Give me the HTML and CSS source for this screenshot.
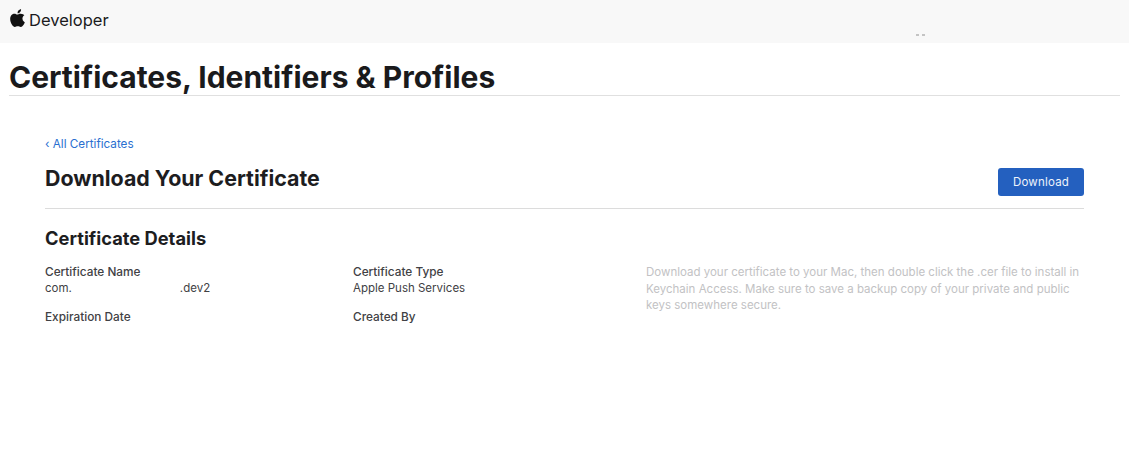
FILE: index.html
```html
<!DOCTYPE html>
<html lang="en">
<head>
<meta charset="utf-8">
<title>Download Your Certificate</title>
<link rel="stylesheet" href="styles.css">
</head>
<body>
<header class="topbar">
  <svg class="apple" viewBox="0 0 814 1000" aria-hidden="true"><path d="M788 341c-6 4-108 62-108 190 0 148 130 200 134 202-1 3-21 72-69 142-43 62-88 123-156 123s-86-40-165-40c-77 0-104 41-166 41s-106-57-156-127C44 790 0 668 0 553c0-186 121-285 240-285 63 0 116 42 155 42 38 0 97-44 169-44 27 0 125 2 224 75zM554 168c30-35 51-84 51-133 0-7-1-14-2-20-49 2-107 33-142 73-27 31-53 80-53 130 0 8 1 15 2 18 3 0 8 1 13 1 44 0 99-30 131-69z"/></svg>
  <span class="brand">Developer</span>
  <span class="specks"><i></i><i></i></span>
</header>
<div class="titlebar"><h1>Certificates, Identifiers &amp; Profiles</h1></div>
<main class="content">
  <a class="back" href="#">‹ All Certificates</a>
  <div class="head">
    <h2>Download Your Certificate</h2>
    <a class="btn" href="#">Download</a>
  </div>
  <h3>Certificate Details</h3>
  <div class="details">
    <div class="col-a">
      <div class="field">
        <div class="label">Certificate Name</div>
        <div class="value">com.<span class="blank"></span>.dev2</div>
      </div>
      <div class="label">Expiration Date</div>
    </div>
    <div class="col-b">
      <div class="field">
        <div class="label">Certificate Type</div>
        <div class="value">Apple Push Services</div>
      </div>
      <div class="label">Created By</div>
    </div>
    <p class="note">Download your certificate to your Mac, then double click the .cer file to install in Keychain Access. Make sure to save a backup copy of your private and public keys somewhere secure.</p>
  </div>
</main>
</body>
</html>
```
FILE: styles.css
```css
* { box-sizing: border-box; }
html, body { margin: 0; padding: 0; background: #fff; }
body {
  font-family: Inter, "Liberation Sans", sans-serif;
  color: #1d1d1f;
  height: 453px;
  overflow: hidden;
}
.topbar {
  position: relative;
  display: flex;
  align-items: center;
  gap: 4px;
  height: 43px;
  padding: 0 0 3px 10px;
  background: #f8f8f8;
}
.apple { width: 15px; height: 18px; margin-bottom: 5px; fill: #111; }
.brand { font-size: 16.5px; color: #1b1b1d; }
.specks { position: absolute; left: 916px; top: 34px; display: flex; gap: 3px; }
.specks i { display: block; width: 3px; height: 2px; background: #c4c4c4; }
.titlebar { margin: 0 9px; height: 53px; border-bottom: 1px solid #e0e0e0; }
h1 {
  margin: 0;
  padding-top: 16px;
  font-size: 30px;
  line-height: 36px;
  font-weight: 700;
  color: #1a1a1c;
}
.content { padding: 41px 45px 0; }
.back { display: block; font-size: 11.7px; line-height: 15px; color: #2a6fd0; text-decoration: none; }
.head {
  display: flex;
  justify-content: space-between;
  align-items: flex-start;
  height: 57px;
  padding-top: 16px;
  border-bottom: 1px solid #dcdcdc;
}
h2 { margin: 0; font-size: 21.4px; line-height: 21px; font-weight: 700; }
.btn {
  width: 86px;
  height: 28px;
  line-height: 28px;
  text-align: center;
  font-size: 11.5px;
  letter-spacing: 0.2px;
  color: #eef3fb;
  background: #2460bf;
  border-radius: 3px;
  text-decoration: none;
}
h3 { margin: 18px 0 0; font-size: 18.3px; line-height: 23px; font-weight: 700; }
.details {
  display: grid;
  grid-template-columns: 308px 293px 1fr;
  margin-top: 14px;
}
.label, .value { font-size: 11.5px; line-height: 16px; color: #414144; }
.label { font-size: 11.8px; font-weight: 500; }
.field { margin-bottom: 13px; }
.blank { display: inline-block; width: 108px; }
.note { margin: 0; font-size: 11.5px; line-height: 16.5px; color: #c2c2c4; }
```
